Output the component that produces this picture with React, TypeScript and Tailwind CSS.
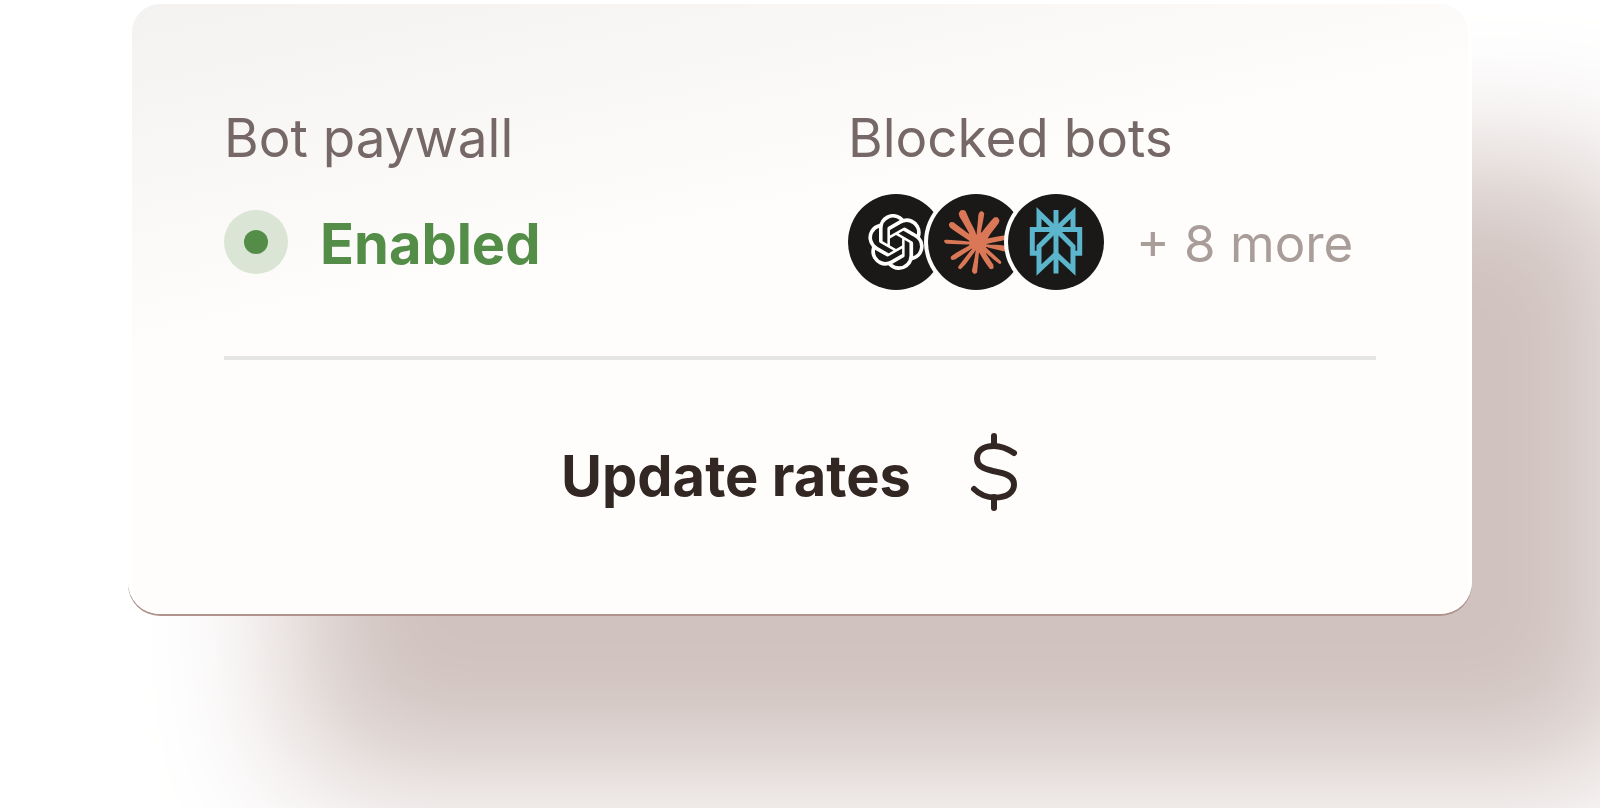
import React from 'react';
import { SiOpenai, SiClaude } from 'react-icons/si';

const PerplexityIcon = () => (
  <svg viewBox="0 2 56 72" className="h-18 w-14" fill="none" stroke="#5bb5cd" strokeWidth="5" aria-hidden="true">
    <path d="M28 6V69.5" />
    <path d="M11 25.5V9L28 25.5L45 9V25.5" />
    <path d="M11 49.2H4.3V25.5H51.7V49.2H45" />
    <path d="M28 25.5L11 42.5V66L28 50L45 66V42.5Z" strokeMiterlimit="6" />
  </svg>
);

const DollarIcon = () => (
  <svg
    viewBox="0 0 96 96"
    className="size-24"
    fill="none"
    stroke="currentColor"
    strokeWidth="6"
    strokeLinecap="round"
    strokeLinejoin="round"
    aria-hidden="true"
  >
    <path d="M51 12V22M51 73V84" />
    <path d="M71 29C65 25 59 22 51 22C40 22 34 27 34 34.5C34 41.500 39 44.5 50 47C63 49.5 71 52 71 60.5C71 69 63 73.500 52 73.500C44 73.500 36 70 31 65" />
  </svg>
);

const BotAvatar = ({ label, children }: { label: string; children: React.ReactNode }) => (
  <span
    role="img"
    aria-label={label}
    className="flex size-24 items-center justify-center rounded-full bg-[#1b1917] ring-4 ring-[#fffdfb]"
  >
    {children}
  </span>
);

export default function App() {
  return (
    <main className="min-h-screen overflow-hidden bg-white font-['Inter',sans-serif]">
      <section className="mx-[8%] mb-48 rounded-[32px] border-4 border-b-0 border-white bg-linear-[168deg] from-[#f3f2f1] to-[#fffdfb] to-40% px-23 pt-25 pb-[94px] shadow-[0_2px_0_#b0938d,168px_164px_144px_#d0c2be]">
        <div className="grid grid-cols-2 gap-24 border-b-4 border-[#e5e5e4] pb-[66px]">
          <div>
            <h2 className="text-[53px] leading-[68px] font-normal text-[#756866]">Bot paywall</h2>
            <div className="mt-[22px] flex h-24 items-center gap-8">
              <span className="flex size-16 items-center justify-center rounded-full bg-[#dae5d6]">
                <span className="size-6 rounded-full bg-[#548d48]" />
              </span>
              <span className="pt-1 text-[56px] leading-[68px] font-bold text-[#548d48]">Enabled</span>
            </div>
          </div>
          <div>
            <h2 className="text-[53px] leading-[68px] font-normal text-[#756866]">Blocked bots</h2>
            <div className="mt-[22px] flex h-24 items-center gap-8">
              <div className="flex -space-x-4">
                <BotAvatar label="OpenAI">
                  <SiOpenai className="size-14 text-white" />
                </BotAvatar>
                <BotAvatar label="Claude">
                  <SiClaude className="size-16 text-[#d97757]" />
                </BotAvatar>
                <BotAvatar label="Perplexity">
                  <PerplexityIcon />
                </BotAvatar>
              </div>
              <span className="pt-1 text-[51px] leading-[68px] font-normal whitespace-nowrap text-[#a99d9a]">
                + 8 more
              </span>
            </div>
          </div>
        </div>
        <div className="flex justify-center pt-16">
          <button className="flex items-center gap-8 text-[56px] leading-[68px] font-bold text-[#332724]">
            <span className="pt-2">Update rates</span>
            <DollarIcon />
          </button>
        </div>
      </section>
    </main>
  );
}
